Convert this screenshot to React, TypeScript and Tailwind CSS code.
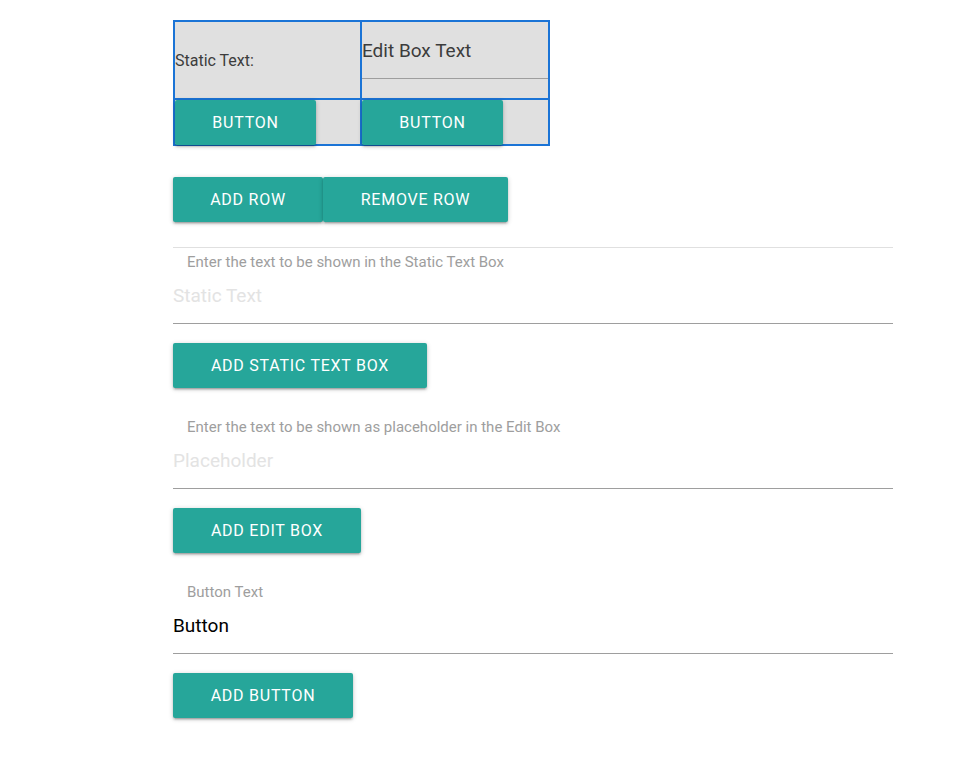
import React from 'react';

const btnBase =
  'h-[45px] rounded-[2px] bg-[#26a69a] text-white text-[16px] tracking-[0.75px] uppercase flex items-center justify-center pt-[1px] shadow-[0_2px_2px_0_rgba(0,0,0,0.14),0_3px_1px_-2px_rgba(0,0,0,0.12),0_1px_5px_0_rgba(0,0,0,0.2)]';

function Field({ label, value, placeholder }: { label: string; value?: string; placeholder: string }) {
  return (
    <div>
      <div className="h-[18px] leading-[17px] pl-[14px] text-[15px] text-[#9e9e9e]">{label}</div>
      <div className="h-[52px] pb-[3px] flex items-center border-b border-[#9e9e9e] text-[19px]">
        {value ? (
          <span className="text-black">{value}</span>
        ) : (
          <span className="text-[#e3e3e3]">{placeholder}</span>
        )}
      </div>
    </div>
  );
}

export default function App() {
  return (
    <div className="min-h-screen bg-white font-['Roboto',_'Liberation_Sans',_sans-serif]">
      <div className="ml-[173px] w-[720px] pt-[20px]">
        {/* grid table */}
        <div className="w-[377px] bg-[#1b74d6] p-[2px] grid grid-cols-[185px_186px] grid-rows-[76px_44px] gap-[2px]">
          <div className="bg-[#e0e0e0] flex items-center pt-[2px] text-[16px] text-[#3c3c3c]">Static Text:</div>
          <div className="bg-[#e0e0e0] flex flex-col">
            <div className="h-[57px] pt-[3px] border-b border-[#9e9e9e] flex items-center text-[19px] text-[#3c3c3c]">
              Edit Box Text
            </div>
          </div>
          <div className="bg-[#e0e0e0]">
            <button className={`${btnBase} w-[141px] h-[44px]`}>Button</button>
          </div>
          <div className="bg-[#e0e0e0]">
            <button className={`${btnBase} w-[141px] h-[44px]`}>Button</button>
          </div>
        </div>

        <div className="flex mt-[31px]">
          <button className={`${btnBase} w-[150px]`}>Add Row</button>
          <button className={`${btnBase} w-[185px]`}>Remove Row</button>
        </div>

        <div className="mt-[25px] border-t border-[#e0e0e0] pt-[6px]">
          <Field label="Enter the text to be shown in the Static Text Box" placeholder="Static Text" />
          <button className={`${btnBase} w-[254px] mt-[19px]`}>Add Static Text Box</button>

          <div className="mt-[31px]">
            <Field label="Enter the text to be shown as placeholder in the Edit Box" placeholder="Placeholder" />
          </div>
          <button className={`${btnBase} w-[188px] mt-[19px]`}>Add Edit Box</button>

          <div className="mt-[31px]">
            <Field label="Button Text" value="Button" placeholder="" />
          </div>
          <button className={`${btnBase} w-[180px] mt-[19px]`}>Add Button</button>
        </div>
      </div>
    </div>
  );
}
